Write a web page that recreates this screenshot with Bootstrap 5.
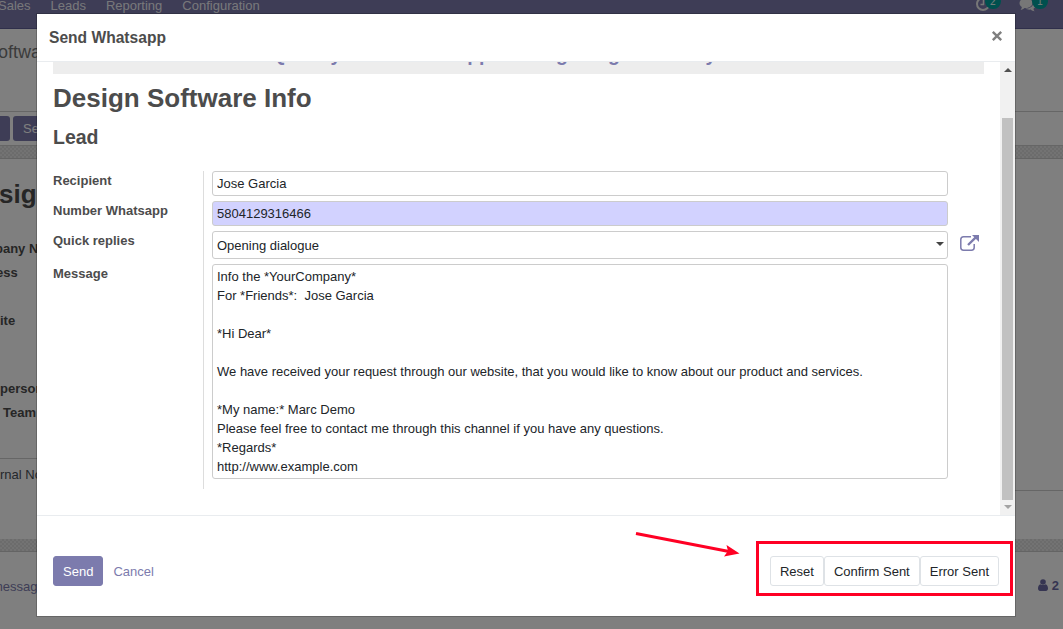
<!DOCTYPE html>
<html lang="en">
<head>
<meta charset="utf-8">
<meta name="viewport" content="width=device-width, initial-scale=1">
<title>Send Whatsapp</title>
<link href="https://cdn.jsdelivr.net/npm/bootstrap@5.3.0/dist/css/bootstrap.min.css" rel="stylesheet">
<style>
  :root { --brand: #7c7bad; --ink: #4c4c4c; }
  body { font: 13px/19px "Liberation Sans", Arial, sans-serif; color: var(--ink); height: 629px; overflow: hidden; background: #fff; }
  svg { display: block; }
  /* page behind the dialog */
  .app-page { height: 629px; overflow: hidden; white-space: nowrap; }
  .app-nav { height: 29px; background: var(--brand); border-bottom: 1px solid #5f5e97; color: rgba(255,255,255,.9); padding-right: 15px; }
  .app-nav ul { margin-left: -2px; gap: 20px; margin-top: -4px; }
  .tray { gap: 18px; margin-top: -4px; }
  .tray-count { background: #00a09d; border-radius: 8px; font: 10px/12px "DejaVu Sans", sans-serif; height: 15px; width: 16px; text-align: center; margin-left: -5px; margin-top: -2px; padding-top: 2px; }
  .crumbs { height: 83px; border-bottom: 1px solid #ccc; font-size: 18px; color: #777; padding-top: 14px; }
  .statusbar { height: 34px; border-bottom: 1px solid #ccc; padding-top: 4px; gap: 3px; }
  .status-btn { height: 25px; width: 60px; background: var(--brand); color: #fff; border-radius: 3px; padding: 3px 10px; }
  .status-btn.cut { width: 20px; margin-left: -10px; }
  .hatch { height: 13px; background: repeating-conic-gradient(#d8d8d8 0 25%, #e6e6e6 0 50%) 0 0/4px 4px; border-bottom: 1px solid #c8c8c8; }
  .sheet { height: 380px; font-weight: 700; }
  .sheet-main { width: 526px; }
  .sheet h1 { font-size: 26px; line-height: 30px; font-weight: 700; margin: 20px 0 30px -1px; }
  .sheet-tab { border-top: 1px solid #ccc; font-weight: 400; padding-top: 6px; color: #495057; }
  .sheet-side { border-bottom: 1px solid #ccc; height: 332px; }
  .chatter { padding: 22px 4px 0 0; color: var(--brand); }
  /* dialog */
  .modal-backdrop.show { --bs-backdrop-opacity: .5; }
  .modal-dialog { width: 980px; max-width: none; margin: 13px 0 0 36px; }
  .modal-content { height: 604px; border-radius: 0; border: 1px solid rgba(0,0,0,.2); color: var(--ink); }
  .modal-header { height: 48px; padding: 0 12px; border-bottom: 1px solid #e9ecef; border-radius: 0; }
  .modal-title { font-size: 15.6px; line-height: 24px; font-weight: 700; }
  .modal-body { flex: none; height: 453px; padding: 0; }
  .dlg-content { padding: 0 16px; }
  .tagline { height: 12px; background: #ededed; }
  .tagline h3 { color: var(--brand); font-size: 19.5px; font-weight: 700; line-height: 24px; margin: -20px 0 0 218px; white-space: nowrap; }
  .tagline, .modal-body { overflow: hidden; }
  h2.doc-name { font-size: 26px; line-height: 31px; font-weight: 700; margin: 9px 0 12px; }
  h3.doc-kind { font-size: 19.5px; line-height: 23px; font-weight: 700; margin: 0 0 22px; }
  .f-label { width: 150px; font-weight: 700; }
  .f-cell { border-left: 1px solid #ddd; padding: 0 0 5px 8px; width: 745px; }
  .form-control, .form-select { font-size: 13px; line-height: 19px; color: #212529; border: 1px solid #ccc; border-radius: 3px; padding: 2px 4px; height: 25px; min-height: 0; }
  .form-control.required { background: #d2d2ff; }
  .form-select { height: 28px; padding-top: 4px; background-image: none; }
  .caret { right: 4px; top: 11px; border: 4px solid transparent; border-top-color: #444; border-bottom: 0; }
  textarea.form-control { height: 215px; resize: none; overflow: hidden; }
  .f-last .f-cell { padding-bottom: 10px; }
  .scroll-track { width: 15px; background: #f1f1f1; padding: 5px 2px 6px; }
  .scroll-thumb { width: 11px; height: 382px; background: #c1c1c1; }
  .modal-footer { height: 101px; border-top: 1px solid #e9ecef; padding: 10px 16px 0; border-radius: 0; }
  .modal-footer > * { margin: 0; }
  .btn { font-size: 13px; line-height: 19px; height: 30px; padding: 5px 9px 4px; border-radius: 3px; }
  .btn-brand, .btn-brand:hover { background: var(--brand); border-color: var(--brand); color: #fff; }
  .btn-text { color: var(--brand); }
  .btn-plain { background: #fff; border-color: #dee2e6; color: #212529; }
  .callout-box { border: 3px solid #ff0024; left: 719px; top: 527px; width: 257px; height: 55px; pointer-events: none; }
  .callout-arrow { left: 593px; top: 513px; pointer-events: none; }
</style>
</head>
<body>
<div class="app-page">
  <nav class="app-nav d-flex justify-content-between align-items-start">
    <ul class="list-unstyled d-flex mb-0"><li>Sales</li><li>Leads</li><li>Reporting</li><li>Configuration</li></ul>
    <div class="tray d-flex">
      <div class="d-flex">
        <svg width="16" height="16" viewBox="0 0 16 16" fill="none" stroke="#eee" stroke-width="2" style="margin-right:-1px"><circle cx="8" cy="8" r="6"/><path d="M8.500 4v4.500H5.500" stroke-width="1.500"/></svg>
        <span class="tray-count">2</span>
      </div>
      <div class="d-flex">
        <svg width="18" height="16" viewBox="0 0 18 16" fill="#eee"><path d="M7 2c3.600 0 6.500 2.200 6.500 5S10.600 12 7 12l-1.500-.1C4.500 13 3 13.700 1.500 13.800 2.300 13 2.800 12 2.800 11 1.300 10 .500 8.600.500 7 .500 4.200 3.400 2 7 2z"/><path d="M14.500 6c1.200.8 2 2 2 3.300 0 1.400-.8 2.600-2 3.400 0 1 .4 1.900 1.200 2.600-1.500 0-3-.7-4-1.700-2 .3-4-.1-5.300-1C11.500 12.600 14.800 10 14.500 6z"/></svg>
        <span class="tray-count">1</span>
      </div>
    </div>
  </nav>
  <div class="crumbs"><div style="margin-left:-2px">oftware</div></div>
  <div class="statusbar d-flex"><span class="status-btn cut"></span><span class="status-btn">Send</span></div>
  <div class="hatch"></div>
  <div class="sheet d-flex">
    <div class="sheet-main">
      <h1>sign</h1>
      <div class="d-flex flex-column" style="height:219px">
        <div style="margin:0 0 5px -5px">pany Name</div>
        <div style="margin:0 0 29px -4px">ess</div>
        <div style="margin-bottom:49px">ite</div>
        <div style="margin-bottom:5px">person</div>
        <div style="margin-left:3px">Team</div>
      </div>
      <div class="sheet-tab">rnal Notes</div>
    </div>
    <div class="sheet-side flex-fill"></div>
  </div>
  <div class="hatch"></div>
  <div class="chatter d-flex justify-content-between">
    <span style="margin:3px 0 0 -8px">message</span>
    <b class="d-flex align-items-center gap-1" style="color:#6c6ba5"><svg width="10" height="12" viewBox="0 0 10 12" fill="currentColor"><circle cx="5" cy="3" r="2.800"/><path d="M2.500 5.200C.8 5.400 0 7.300 0 9.500 0 11 .9 12 2 12h6c1.100 0 2-1 2-2.500 0-2.200-.8-4.100-2.500-4.300-1.400 1.200-3.600 1.200-5 0z"/></svg>2</b>
  </div>
</div>

<div class="modal-backdrop show"></div>
<div class="modal d-block" tabindex="-1" style="overflow:hidden">
  <div class="modal-dialog">
    <div class="modal-content">
      <div class="modal-header d-flex justify-content-between">
        <h4 class="modal-title">Send Whatsapp</h4>
        <svg width="12" height="12" viewBox="0 0 12 12" stroke="#7f7f7f" stroke-width="2.400" style="margin-top:-4px"><path d="M1.800 1.800l8.400 8.400M10.200 1.800L1.800 10.200"/></svg>
      </div>
      <div class="modal-body d-flex">
        <div class="dlg-content flex-fill">
          <div class="tagline"><h3>Quickly send Whatsapp Message to get delivery data</h3></div>
          <h2 class="doc-name">Design Software Info</h2>
          <h3 class="doc-kind">Lead</h3>
          <div class="d-flex"><label class="f-label" for="rec">Recipient</label><div class="f-cell"><input id="rec" class="form-control" value="Jose Garcia"></div></div>
          <div class="d-flex"><label class="f-label" for="num">Number Whatsapp</label><div class="f-cell"><input id="num" class="form-control required" value="5804129316466"></div></div>
          <div class="d-flex"><label class="f-label" for="quick">Quick replies</label>
            <div class="f-cell"><div class="position-relative"><div id="quick" class="form-select">Opening dialogue</div><span class="caret position-absolute"></span></div></div>
            <svg width="20" height="18" viewBox="0 0 20 18" fill="none" stroke="#7c7bad" stroke-width="1.500" style="margin:3px 0 0 12px"><path d="M11 2.800H3.500Q.8 2.800.8 5.500v8q0 2.700 2.700 2.700h8q2.700 0 2.700-2.700V10"/><path d="M8 11l7.500-7.300" stroke-width="2.400"/><path d="M12 1h7v7z" fill="#7c7bad" stroke="none"/></svg>
          </div>
          <div class="d-flex f-last"><label class="f-label" for="msg">Message</label><div class="f-cell"><textarea id="msg" class="form-control">Info the *YourCompany*
For *Friends*:  Jose Garcia

*Hi Dear*

We have received your request through our website, that you would like to know about our product and services.

*My name:* Marc Demo
Please feel free to contact me through this channel if you have any questions.
*Regards*
http://www.example.com</textarea></div></div>
        </div>
        <div class="scroll-track d-flex flex-column align-items-center">
          <svg width="8" height="5" viewBox="0 0 8 5"><path d="M0 5L4 1l4 4z" fill="#505050"/></svg>
          <div class="scroll-thumb" style="margin:46px 0 5px"></div>
          <svg width="8" height="4" viewBox="0 0 8 4"><path d="M0 0h8L4 4z" fill="#a3a3a3"/></svg>
        </div>
      </div>
      <div class="modal-footer d-flex justify-content-between">
        <div class="d-flex"><button class="btn btn-brand">Send</button><button class="btn btn-text">Cancel</button></div>
        <div class="d-flex"><button class="btn btn-plain">Reset</button><button class="btn btn-plain">Confirm Sent</button><button class="btn btn-plain">Error Sent</button></div>
      </div>
      <div class="callout-box position-absolute"></div>
      <svg class="callout-arrow position-absolute" width="112" height="32" viewBox="0 0 112 32"><path d="M6 6.500L99 24.500" stroke="#ff0024" stroke-width="3"/><path d="M109.500 26.500L96.500 18l1.500 6-4 5.500z" fill="#ff0024"/></svg>
    </div>
  </div>
</div>
<script src="https://cdn.jsdelivr.net/npm/bootstrap@5.3.0/dist/js/bootstrap.bundle.min.js"></script>
</body>
</html>
